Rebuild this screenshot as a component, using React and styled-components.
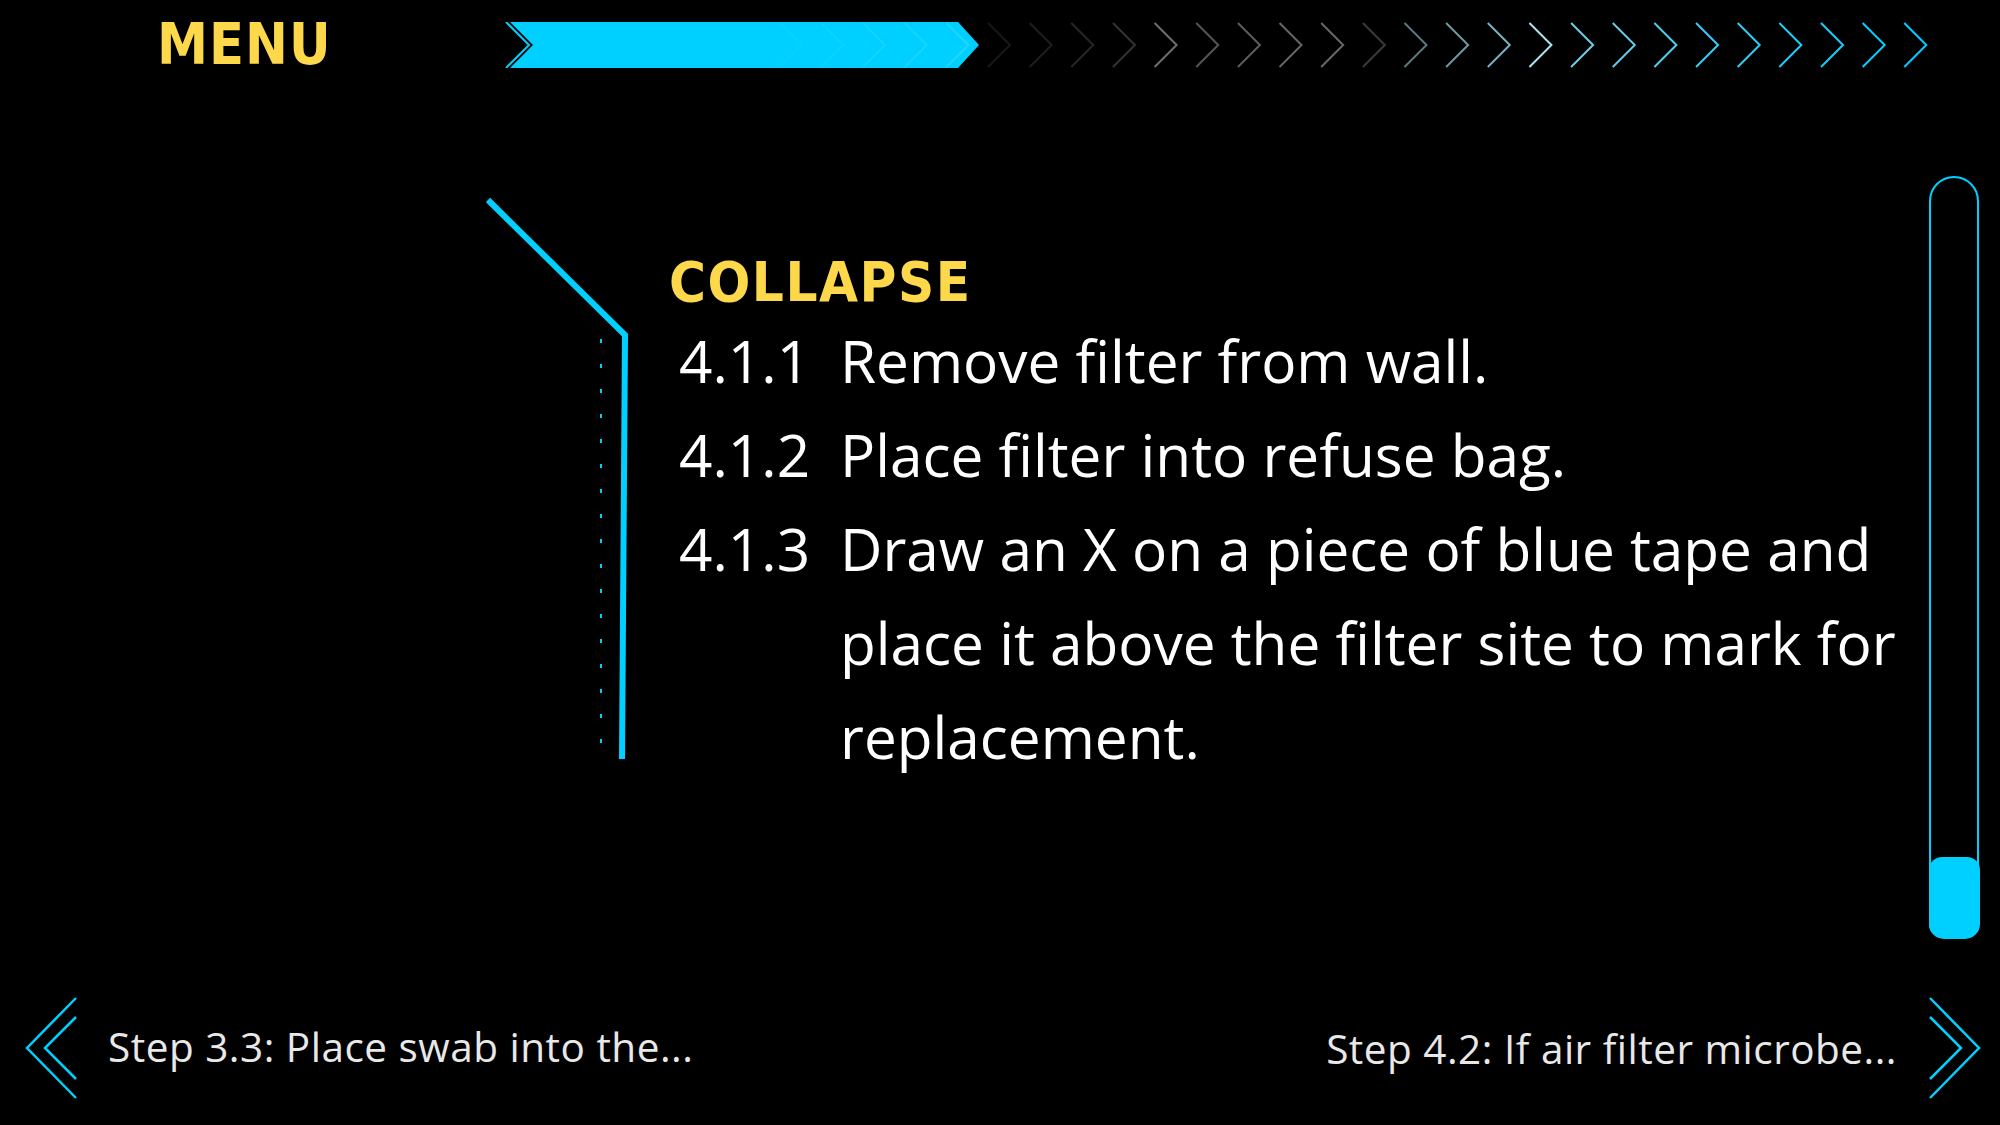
import React from 'react';
import styled, { createGlobalStyle } from 'styled-components';

const CYAN = '#00d0ff';
const YELLOW = '#fdd84b';

const GlobalStyle = createGlobalStyle`
  html, body {
    margin: 0;
    padding: 0;
    background: #000;
  }
  body {
    font-family: "Open Sans", "Noto Sans", sans-serif;
  }
`;

const Screen = styled.div`
  width: 2000px;
  height: 1125px;
  background: #000;
  display: flex;
  flex-direction: column;
  overflow: hidden;
`;

const Header = styled.header`
  height: 89px;
  display: flex;
  align-items: center;
  flex: none;
`;

const MenuTitle = styled.div`
  width: 505px;
  box-sizing: border-box;
  padding-left: 157px;
  font-family: "DejaVu Sans Condensed", "DejaVu Sans", sans-serif;
  font-weight: bold;
  font-size: 57px;
  line-height: 1;
  color: ${YELLOW};
  letter-spacing: 1px;
`;

const Body = styled.main`
  flex: 1;
  display: flex;
  align-items: flex-start;
`;

const FrameArt = styled.svg`
  flex: none;
  margin-left: 486px;
  margin-top: 108px;
`;

const Content = styled.section`
  flex: none;
  margin-left: 39px;
  margin-top: 165px;
`;

const SectionTitle = styled.h2`
  margin: 0 0 3px;
  font-family: "DejaVu Sans Condensed", "DejaVu Sans", sans-serif;
  font-weight: bold;
  font-size: 56px;
  line-height: 56px;
  letter-spacing: 1.5px;
  color: ${YELLOW};
`;

const StepList = styled.ol`
  list-style: none;
  margin: 0;
  padding: 0 0 0 10px;
`;

const StepRow = styled.li`
  display: grid;
  grid-template-columns: 161px 1075px;
  font-size: 58.5px;
  line-height: 94px;
  color: #fff;
`;

const StepNumber = styled.span`
  white-space: nowrap;
`;

const StepText = styled.span``;

const ScrollTrack = styled.div`
  flex: none;
  margin-left: auto;
  margin-right: 21px;
  margin-top: 87px;
  width: 50px;
  height: 762px;
  box-sizing: border-box;
  border: 2.5px solid ${CYAN};
  border-radius: 25px 25px 14px 14px;
  display: flex;
  flex-direction: column;
  justify-content: flex-end;
`;

const ScrollThumb = styled.div`
  height: 82px;
  margin: 0 -2.5px -2.5px;
  background: ${CYAN};
  border-radius: 13px 13px 15px 15px;
`;

const Footer = styled.footer`
  height: 140px;
  box-sizing: border-box;
  padding: 0 19px 14px 25px;
  display: flex;
  align-items: center;
  justify-content: space-between;
  flex: none;
`;

const NavLink = styled.a`
  display: flex;
  align-items: center;
  gap: ${(p) => p.$gap}px;
  color: #e8e8e8;
  font-size: 40.5px;
  letter-spacing: 0.5px;
  text-decoration: none;
  cursor: pointer;
`;

const NavLabel = styled.span`
  position: relative;
  top: ${(p) => p.$shift || 0}px;
`;

const chevronColors = [
  '#181818', '#1e1e1e', '#262626', '#333333', '#6e6e6e', '#555555',
  '#5c5c5c', '#666666', '#686868', '#3a3a3a', '#5f7880', '#6f98a5',
  '#78b2c2', '#a8e4f2', '#70cde5', '#62cbe8', '#52cdef', '#35cdf6',
  '#2fcdf6', '#1ccffd', '#12d0ff', '#05d0ff', '#00ccff',
];

const STEP = 41.65;

function ProgressBar() {
  const inner = [1, 2, 3, 4, 5];
  return (
    <svg width="1430" height="46" viewBox="0 0 1430 46">
      <polyline points="1,0 24,23 1,46" fill="none" stroke={CYAN} strokeWidth="2" />
      <polygon points="5,0 453,0 474,23 453,46 5,46 28,23" fill={CYAN} />
      {inner.map((k) => {
        const x = 483 - STEP * k;
        return (
          <polyline
            key={k}
            points={`${x},1 ${x + 22},23 ${x},45`}
            fill="none"
            stroke="#ffffff"
            strokeOpacity={0.14 - k * 0.022}
            strokeWidth="2"
          />
        );
      })}
      {chevronColors.map((c, i) => {
        const x = 483 + STEP * i;
        return (
          <polyline
            key={i}
            points={`${x},1 ${x + 22},23 ${x},45`}
            fill="none"
            stroke={c}
            strokeWidth="2"
          />
        );
      })}
    </svg>
  );
}

function DoubleChevron({ dir }) {
  const flip = dir === 'right' ? 'translate(56 0) scale(-1 1)' : undefined;
  return (
    <svg width="56" height="104" viewBox="0 0 56 104">
      <g transform={flip} fill="none" stroke={CYAN} strokeWidth="2.5">
        <polyline points="51,2 2,52 51,102" />
        <polyline points="51,21 20,52 51,83" />
      </g>
    </svg>
  );
}

const steps = [
  { id: '4.1.1', text: 'Remove filter from wall.' },
  { id: '4.1.2', text: 'Place filter into refuse bag.' },
  {
    id: '4.1.3',
    text: 'Draw an X on a piece of blue tape and place it above the filter site to mark for replacement.',
  },
];

export default function App() {
  return (
    <>
      <GlobalStyle />
      <Screen>
        <Header>
          <MenuTitle>MENU</MenuTitle>
          <ProgressBar />
        </Header>
        <Body>
          <FrameArt width="144" height="564" viewBox="0 0 144 564">
            <polyline
              points="2,3 139,138 136,562"
              fill="none"
              stroke={CYAN}
              strokeWidth="6"
              strokeLinejoin="miter"
            />
            <line
              x1="115"
              y1="142"
              x2="115"
              y2="562"
              stroke={CYAN}
              strokeWidth="2"
              strokeDasharray="4 21"
            />
          </FrameArt>
          <Content>
            <SectionTitle>COLLAPSE</SectionTitle>
            <StepList>
              {steps.map((s) => (
                <StepRow key={s.id}>
                  <StepNumber>{s.id}</StepNumber>
                  <StepText>{s.text}</StepText>
                </StepRow>
              ))}
            </StepList>
          </Content>
          <ScrollTrack>
            <ScrollThumb />
          </ScrollTrack>
        </Body>
        <Footer>
          <NavLink $gap={27}>
            <DoubleChevron dir="left" />
            <NavLabel $shift={-2}>Step 3.3: Place swab into the...</NavLabel>
          </NavLink>
          <NavLink $gap={28}>
            <NavLabel>Step 4.2: If air filter microbe...</NavLabel>
            <DoubleChevron dir="right" />
          </NavLink>
        </Footer>
      </Screen>
    </>
  );
}
